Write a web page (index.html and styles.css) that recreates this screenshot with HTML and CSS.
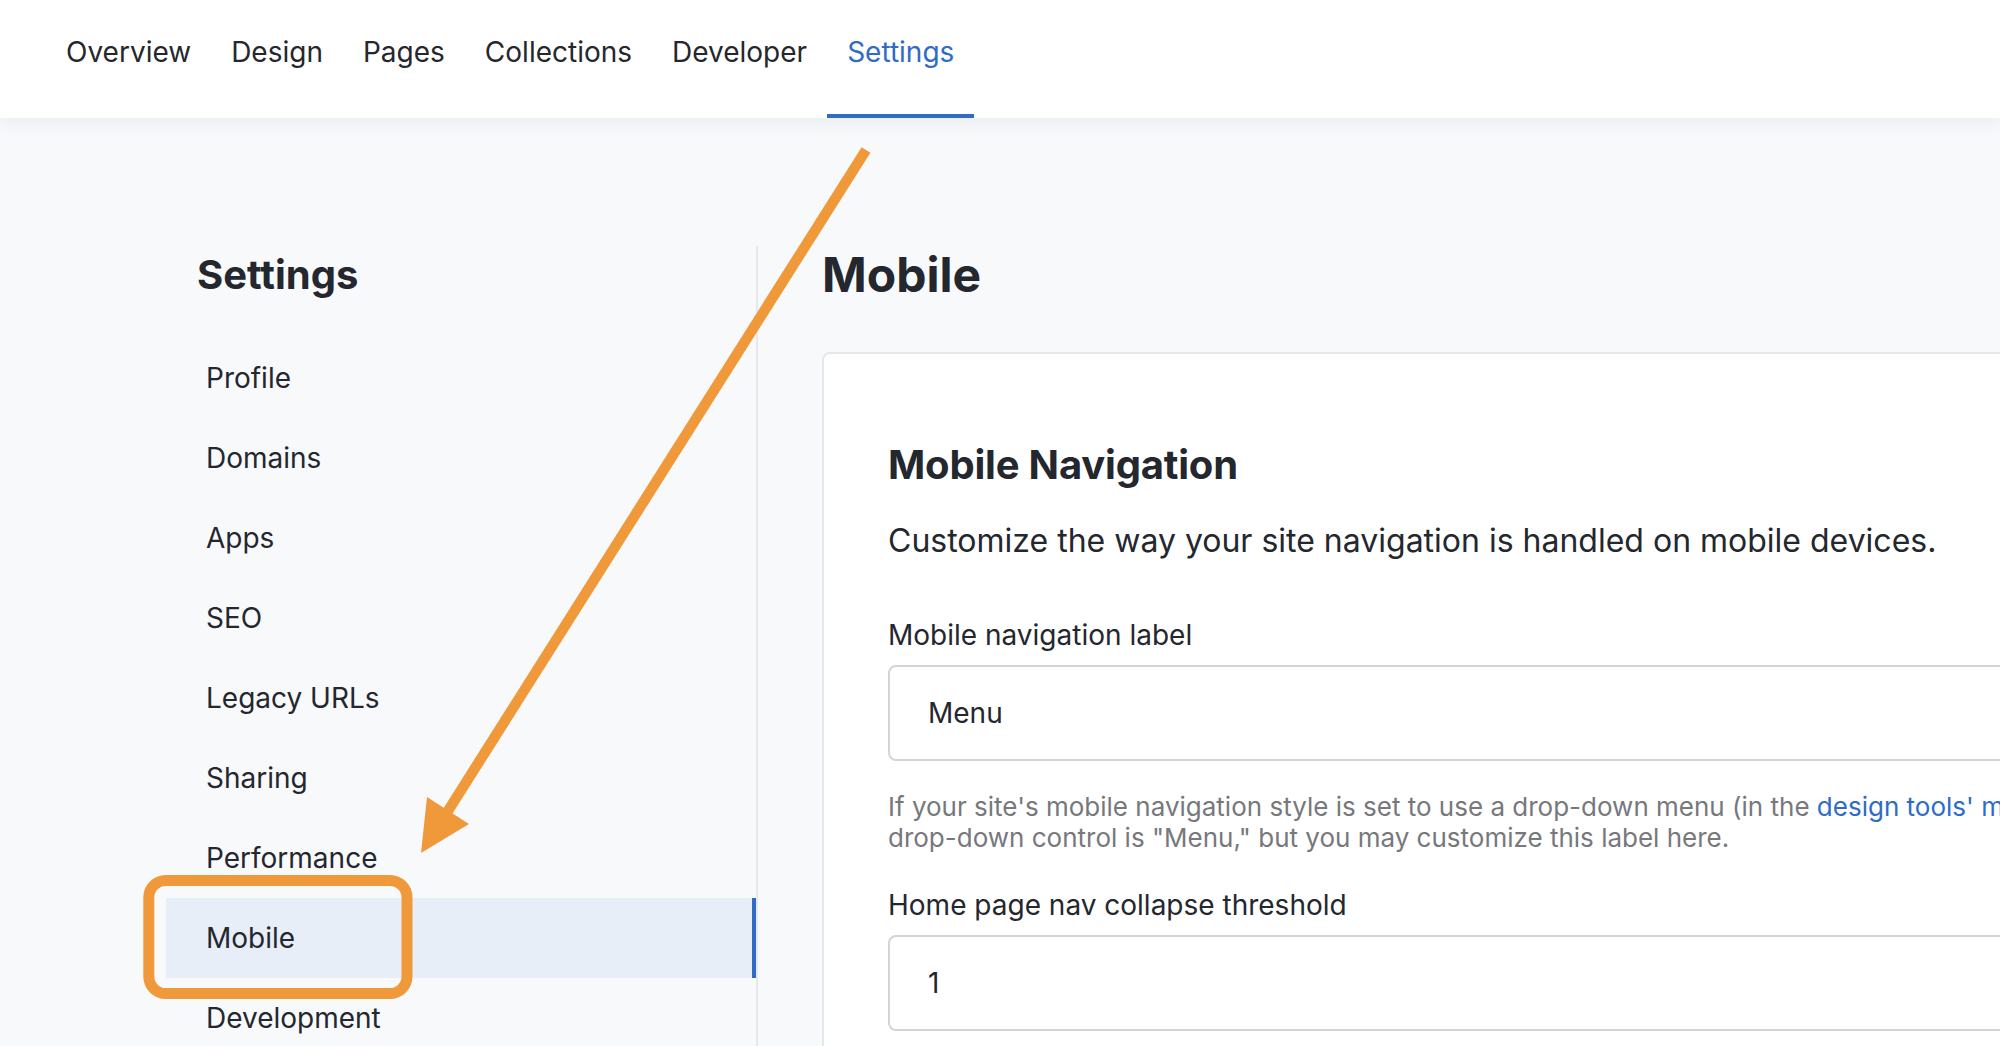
FILE: index.html
```html
<!DOCTYPE html>
<html lang="en">
<head>
<meta charset="utf-8">
<title>Settings – Mobile</title>
<link rel="stylesheet" href="styles.css">
</head>
<body>
<header class="topbar">
  <nav class="topnav">
    <a class="topnav-item" href="#">Overview</a>
    <a class="topnav-item" href="#">Design</a>
    <a class="topnav-item" href="#">Pages</a>
    <a class="topnav-item" href="#">Collections</a>
    <a class="topnav-item" href="#">Developer</a>
    <a class="topnav-item is-active" href="#">Settings</a>
  </nav>
</header>

<main class="layout">
  <aside class="sidebar">
    <h1 class="sidebar-title">Settings</h1>
    <ul class="sidebar-list">
      <li><a class="sidebar-item" href="#">Profile</a></li>
      <li><a class="sidebar-item" href="#">Domains</a></li>
      <li><a class="sidebar-item" href="#">Apps</a></li>
      <li><a class="sidebar-item" href="#">SEO</a></li>
      <li><a class="sidebar-item" href="#">Legacy URLs</a></li>
      <li><a class="sidebar-item" href="#">Sharing</a></li>
      <li><a class="sidebar-item" href="#">Performance</a></li>
      <li><a class="sidebar-item is-active" href="#">Mobile</a></li>
      <li><a class="sidebar-item" href="#">Development</a></li>
    </ul>
  </aside>

  <section class="content">
    <h1 class="page-title">Mobile</h1>
    <div class="card">
      <h2 class="card-title">Mobile Navigation</h2>
      <p class="card-intro">Customize the way your site navigation is handled on mobile devices.</p>

      <div class="field">
        <label class="field-label" for="navlabel">Mobile navigation label</label>
        <input class="field-input" id="navlabel" type="text" value="Menu">
        <p class="field-help">If your site's mobile navigation style is set to use a drop-down menu (in the <a class="help-link" href="#">design tools' mobile settings</a>), the default label for the<br>drop-down control is "Menu," but you may customize this label here.</p>
      </div>

      <div class="field">
        <label class="field-label" for="threshold">Home page nav collapse threshold</label>
        <input class="field-input" id="threshold" type="text" value="1">
      </div>
    </div>
  </section>
</main>

<svg class="annotation" width="2000" height="1046" viewBox="0 0 2000 1046" aria-hidden="true">
  <line x1="866" y1="150" x2="446" y2="814" stroke="#f0993b" stroke-width="10.5" stroke-linecap="butt"/>
  <polygon points="421,853 427,797 469,824" fill="#f0993b"/>
  <rect x="148.8" y="880.5" width="258.2" height="113" rx="17" ry="17" fill="none" stroke="#f0993b" stroke-width="11"/>
</svg>
</body>
</html>
```

FILE: styles.css
```css
* {
  box-sizing: border-box;
}

html,
body {
  margin: 0;
  padding: 0;
  overflow: hidden;
}

body {
  position: relative;
  width: 2000px;
  height: 1046px;
  background: #f8f9fb;
  font-family: Inter, "Noto Sans", "Liberation Sans", sans-serif;
  color: #24272e;
}

a {
  color: inherit;
  text-decoration: none;
}

/* ---------- Top bar ---------- */
.topbar {
  position: relative;
  z-index: 2;
  height: 118px;
  background: #ffffff;
  box-shadow: 0 3px 18px rgba(20, 30, 50, 0.07);
}

.topnav {
  display: flex;
  height: 100%;
  padding-left: 46px;
}

.topnav-item {
  display: block;
  height: 118px;
  padding: 32px 20px 0;
  font-size: 28px;
  line-height: 40px;
  color: #25272c;
  border-bottom: 4px solid transparent;
}

.topnav-item.is-active {
  color: #2f6bc7;
  border-bottom-color: #2f6bc7;
}

/* ---------- Layout ---------- */
.layout {
  display: flex;
  align-items: flex-start;
  padding: 128px 0 0 166px;
}

/* ---------- Sidebar ---------- */
.sidebar {
  flex: 0 0 592px;
  min-height: 900px;
  border-right: 2px solid #e6e8eb;
  padding-top: 5px;
}

.sidebar-title {
  margin: 0 0 39px;
  padding-left: 31px;
  font-size: 40px;
  line-height: 48px;
  font-weight: 700;
  color: #24272e;
}

.sidebar-list {
  list-style: none;
  margin: 0;
  padding: 0;
}

.sidebar-item {
  display: block;
  height: 80px;
  padding-left: 40px;
  font-size: 28px;
  line-height: 80px;
  color: #24272e;
}

.sidebar-item.is-active {
  background: #e7eef8;
  border-right: 4px solid #2f6bc7;
}

/* ---------- Content ---------- */
.content {
  flex: 0 0 auto;
  margin-left: 64px;
}

.page-title {
  margin: 0 0 48px;
  font-size: 48px;
  line-height: 58px;
  font-weight: 700;
  color: #24272e;
}

.card {
  width: 1900px;
  background: #ffffff;
  border: 2px solid #e6e7e9;
  border-radius: 8px;
  padding: 64px 64px 64px;
}

.card-title {
  margin: 23px 0 0;
  font-size: 40px;
  line-height: 48px;
  font-weight: 700;
  letter-spacing: -0.2px;
  color: #24272e;
}

.card-intro {
  margin: 28px 0 0;
  font-size: 32px;
  line-height: 48px;
  color: #24272e;
}

.field {
  margin-top: 50px;
}

.field + .field {
  margin-top: 32px;
}

.field-label {
  display: block;
  font-size: 28px;
  line-height: 40px;
  color: #24272e;
}

.field-input {
  display: block;
  width: 100%;
  height: 96px;
  margin-top: 10px;
  padding: 0 38px;
  border: 2px solid #d3d4d7;
  border-radius: 8px;
  background: #ffffff;
  font-family: Inter, "Noto Sans", "Liberation Sans", sans-serif;
  font-size: 28px;
  color: #24272e;
  outline: none;
}

.field-help {
  margin: 30px 0 0;
  font-size: 26px;
  line-height: 31px;
  color: #77787c;
  white-space: nowrap;
}

.help-link {
  color: #2d6cc9;
}

/* ---------- Annotation overlay ---------- */
.annotation {
  position: absolute;
  top: 0;
  left: 0;
  z-index: 5;
  pointer-events: none;
}
```
